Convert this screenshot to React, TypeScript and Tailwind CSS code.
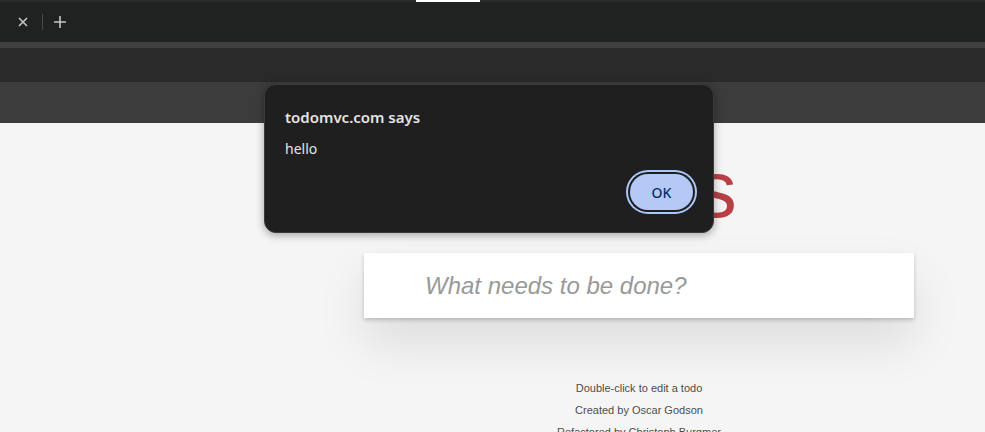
import React from 'react';

/* ─── Browser chrome ─────────────────────────────────────────────────────── */
function TabStrip() {
  return (
    <div className="flex flex-col">
      <div className="flex h-[2px]">
        <div className="w-[416px] bg-[#2b2b2b]" />
        <div className="w-[64px] bg-white" />
        <div className="flex-1 bg-[#2b2b2b]" />
      </div>
      <div className="flex h-[40px] items-center bg-[#202221] pl-[18px]">
        <svg width="10" height="10" viewBox="0 0 10 10" className="text-[#c4c7c5]">
          <path d="M1 1l8 8M9 1l-8 8" stroke="currentColor" strokeWidth="1.6" />
        </svg>
        <div className="ml-[14px] h-[16px] w-px bg-[#4a4c4b]" />
        <svg width="12" height="12" viewBox="0 0 12 12" className="ml-[11px] text-[#c4c7c5]">
          <path d="M6 0v12M0 6h12" stroke="currentColor" strokeWidth="1.6" />
        </svg>
      </div>
      <div className="h-[6px] bg-[#3f3f3f]" />
      <div className="h-[34px] bg-[#2a2a2a]" />
      <div className="h-[41px] bg-[#3c3c3c]" />
    </div>
  );
}

/* ─── TodoMVC page behind the alert ──────────────────────────────────────── */
function TodoPage() {
  return (
    <div className="flex flex-1 flex-col bg-[#f5f5f5] pl-[364px] font-['Liberation_Sans',Arial,sans-serif]">
      <div className="w-[550px]">
        <h1 className="mt-[27px] h-[80px] text-center text-[80px] font-extralight leading-[80px] text-[#b83f45]">
          todos
        </h1>
        <div className="mt-[23px] flex h-[65px] items-center bg-white pl-[61px] shadow-[0_2px_4px_0_rgba(0,0,0,0.2),0_25px_50px_0_rgba(0,0,0,0.1)]">
          <span className="text-[24px] italic text-[#999999]">What needs to be done?</span>
        </div>
        <div className="mt-[59px] flex flex-col items-center text-[11px] leading-[22px] text-[#4d4d4d]">
          <p>Double-click to edit a todo</p>
          <p>Created by Oscar Godson</p>
          <p>Refactored by Christoph Burgmer</p>
        </div>
      </div>
    </div>
  );
}

/* ─── window.alert dialog ────────────────────────────────────────────────── */
function AlertDialog() {
  return (
    <div className="absolute left-[264px] top-[84px] flex h-[149px] w-[450px] flex-col rounded-[12px] border border-[#3a3a3a] bg-[#1f1f1f] px-[20px] pt-[20px] pb-[22px] font-['Noto_Sans',sans-serif] shadow-[0_2px_8px_rgba(0,0,0,0.35)]">
      <div className="text-[15px] font-semibold leading-[24px] text-[#e3e3e3]">todomvc.com says</div>
      <div className="mt-[10px] text-[14px] leading-[20px] text-[#e3e3e3]">hello</div>
      <div className="mt-auto flex justify-end">
        <button className="h-[36px] w-[63px] rounded-full bg-[#b4c9f5] text-[14px] font-medium text-[#0b2c69] shadow-[0_0_0_2px_#1f1f1f,0_0_0_4px_#a8c7fa]">
          OK
        </button>
      </div>
    </div>
  );
}

export default function App() {
  return (
    <div className="relative flex h-[432px] w-[985px] flex-col overflow-hidden">
      <TabStrip />
      <TodoPage />
      <AlertDialog />
    </div>
  );
}
